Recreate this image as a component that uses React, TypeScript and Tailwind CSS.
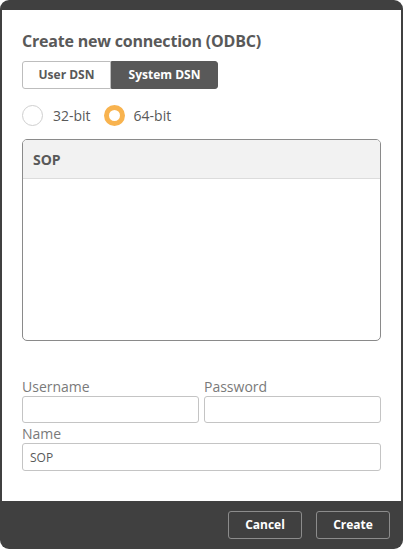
import { useState } from 'react';

const font = { fontFamily: '"Open Sans", "Liberation Sans", sans-serif' };

const App = () => {
  const [tab, setTab] = useState<'user' | 'system'>('system');
  const [bits, setBits] = useState<'32' | '64'>('64');

  return (
    <div className="w-[403px] h-[549px] bg-white" style={font}>
      <div className="flex flex-col h-full bg-[#404040] rounded-[9px] pt-[10px] px-[2px]">
        {/* Body */}
        <div className="flex-1 bg-white px-[20px] pt-[21px]">
          <h1 className="text-[16px] leading-[20px] font-bold text-[#595959] tracking-[-0.2px]">
            Create new connection (ODBC)
          </h1>

          {/* Tabs */}
          <div className="flex mt-[10px] h-[28px]">
            <button
              onClick={() => setTab('user')}
              className={`w-[89px] text-[12px] font-bold rounded-l-[3px] border ${
                tab === 'user' ? 'bg-[#595959] text-white border-[#595959]' : 'bg-white text-[#595959] border-[#bdbdbd]'
              }`}
            >
              User DSN
            </button>
            <button
              onClick={() => setTab('system')}
              className={`w-[107px] text-[12px] font-bold rounded-r-[3px] border ${
                tab === 'system' ? 'bg-[#595959] text-white border-[#595959]' : 'bg-white text-[#595959] border-[#bdbdbd]'
              }`}
            >
              System DSN
            </button>
          </div>

          {/* Radios */}
          <div className="flex items-center mt-[15px] h-[22px] text-[14px] text-[#595959]">
            <button onClick={() => setBits('32')} className="flex items-center">
              <span
                className={`w-[21px] h-[21px] rounded-full ${
                  bits === '32' ? 'border-[5px] border-[#f8b34f]' : 'border border-[#cfcfcf]'
                }`}
              />
              <span className="ml-[10px]">32-bit</span>
            </button>
            <button onClick={() => setBits('64')} className="flex items-center ml-[13px]">
              <span
                className={`w-[21px] h-[21px] rounded-full ${
                  bits === '64' ? 'border-[5px] border-[#f8b34f]' : 'border border-[#cfcfcf]'
                }`}
              />
              <span className="ml-[9px]">64-bit</span>
            </button>
          </div>

          {/* DSN list */}
          <div className="mt-[13px] h-[202px] border border-[#8a8a8a] rounded-[5px] overflow-hidden">
            <div className="h-[39px] bg-[#f2f2f2] border-b border-[#dcdcdc] flex items-center px-[10px] text-[14px] font-bold text-[#595959]">
              SOP
            </div>
          </div>

          {/* Credentials */}
          <div className="grid grid-cols-2 gap-x-[5px] mt-[36px]">
            <div>
              <label className="block text-[14px] leading-[19px] text-[#7a7a7a]">Username</label>
              <input className="w-full h-[27px] border border-[#c4c4c4] rounded-[3px] outline-none px-[7px] text-[12px]" />
            </div>
            <div>
              <label className="block text-[14px] leading-[19px] text-[#7a7a7a]">Password</label>
              <input type="password" className="w-full h-[27px] border border-[#c4c4c4] rounded-[3px] outline-none px-[7px] text-[12px]" />
            </div>
          </div>
          <label className="block text-[14px] leading-[19px] text-[#7a7a7a] mt-[1px]">Name</label>
          <input
            defaultValue="SOP"
            className="w-full h-[28px] border border-[#c4c4c4] rounded-[3px] outline-none px-[7px] text-[12px] text-[#595959]"
          />
        </div>

        {/* Footer */}
        <div className="h-[48px] flex items-center justify-end gap-[14px] pr-[11px]">
          <button className="w-[74px] h-[28px] border border-[#8c8c8c] rounded-[3px] text-white text-[12px] font-bold">
            Cancel
          </button>
          <button className="w-[74px] h-[28px] border border-[#8c8c8c] rounded-[3px] text-white text-[12px] font-bold">
            Create
          </button>
        </div>
      </div>
    </div>
  );
};

export default App;
